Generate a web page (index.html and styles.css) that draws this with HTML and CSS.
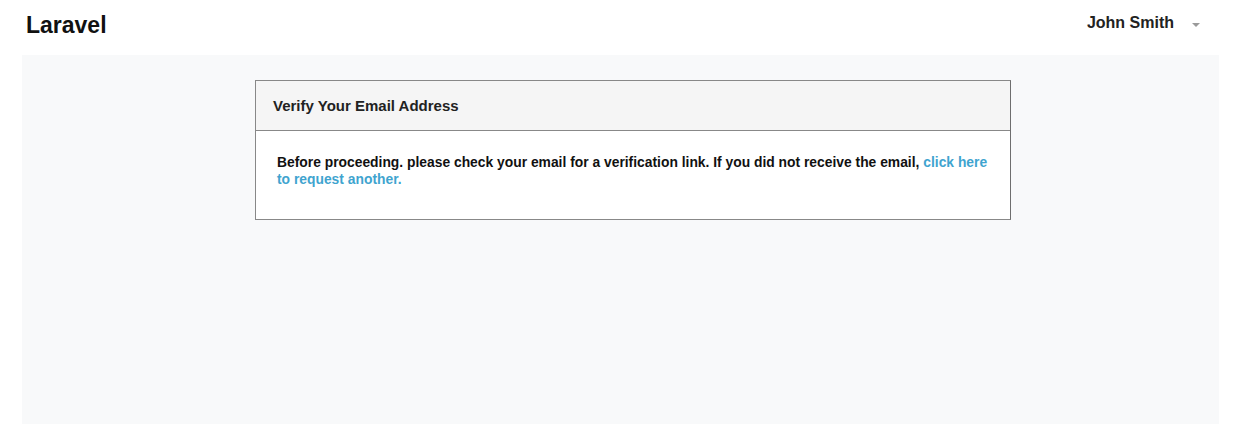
FILE: index.html
```html
<!DOCTYPE html>
<html>
<head>
<meta charset="utf-8">
<link rel="stylesheet" href="styles.css">
</head>
<body>
<header class="navbar">
  <a class="brand">Laravel</a>
  <div class="user">
    <span class="user-name">John Smith</span>
    <svg class="caret" width="8" height="4" viewBox="0 0 8 4"><path d="M0 0H8L4 4Z" fill="#9a9a9a"/></svg>
  </div>
</header>
<main class="main">
  <section class="card">
    <div class="card-header">Verify Your Email Address</div>
    <div class="card-body">
      Before proceeding. please check your email for a verification link. If you did not receive the email, <a class="link">click here to request another.</a>
    </div>
  </section>
</main>
</body>
</html>
```
FILE: styles.css
```css
* { box-sizing: border-box; }
body {
  margin: 0;
  font-family: "Liberation Sans", Arial, sans-serif;
  color: #111;
  background: #fff;
}
.navbar {
  height: 55px;
  display: flex;
  align-items: flex-start;
  justify-content: space-between;
  padding: 0 34px 0 26px;
}
.brand {
  font-size: 23px;
  font-weight: bold;
  line-height: 26px;
  margin-top: 12px;
  color: #111;
}
.user {
  display: flex;
  align-items: center;
  gap: 18px;
  margin-top: 14px;
}
.user-name {
  font-size: 16px;
  font-weight: bold;
  line-height: 18px;
  color: #222;
}
.caret { margin-top: 4px; }
.main {
  margin: 0 15px 0 22px;
  height: 369px;
  background: #f8f9fa;
  padding: 25px 0 0 233px;
}
.card {
  width: 756px;
  border: 1px solid #888;
  border-right-color: #6e6e6e;
  background: #fff;
}
.card-header {
  height: 50px;
  background: #f5f5f5;
  border-bottom: 1px solid #888;
  padding: 0 17px;
  display: flex;
  align-items: center;
  font-size: 15px;
  font-weight: bold;
  color: #222;
}
.card-body {
  height: 88px;
  padding: 23px 10px 0 21px;
  font-size: 13.85px;
  font-weight: bold;
  line-height: 17px;
  color: #111;
}
.link {
  color: #3fa4cf;
}
```
